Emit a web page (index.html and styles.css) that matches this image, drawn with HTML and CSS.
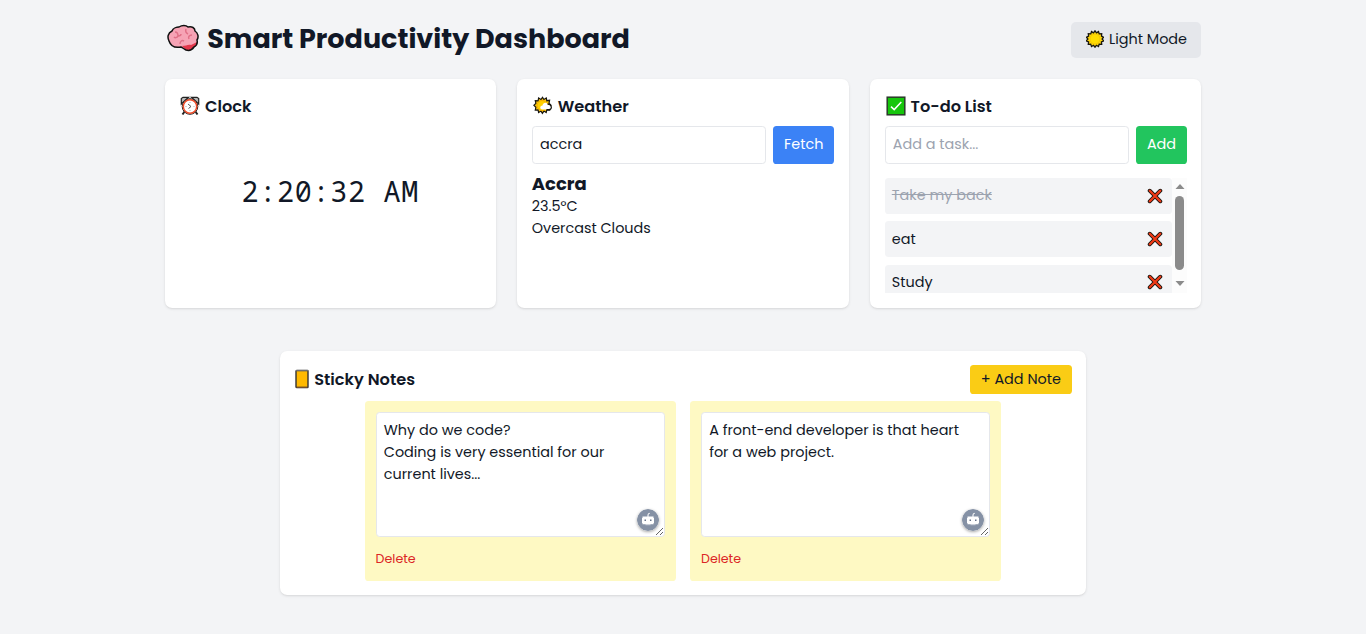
FILE: index.html
```
<!DOCTYPE html>
<html lang="en">
<head>
<meta charset="utf-8">
<title>Smart Productivity Dashboard</title>
<link rel="stylesheet" href="styles.css">
</head>
<body>
<svg class="defs" aria-hidden="true">
  <symbol id="cross" viewBox="0 0 16 16">
    <path d="M2.700 2.700l10.600 10.600M13.300 2.700L2.700 13.300" stroke="#17150f" stroke-width="3.900" stroke-linecap="round"/>
    <path d="M2.800 2.800l10.400 10.400M13.200 2.800L2.800 13.200" stroke="#f03a17" stroke-width="2.300" stroke-linecap="round"/>
  </symbol>
  <symbol id="bot" viewBox="0 0 22 22">
    <circle cx="11" cy="11" r="11" fill="#8591a5"/>
    <path d="M11 8V6q0-1.500 1.800-1.700" fill="none" stroke="#fff" stroke-width="1.100"/>
    <path d="M5.500 7.500h11V9h.5v5h-.5v1.200h-11V14H5V9h.5z" fill="#fff"/>
    <path d="M8.500 15.700h5" stroke="#d5dae2" stroke-width="1"/>
    <rect x="7.500" y="10.500" width="1.500" height="1.500" fill="#66738a"/><rect x="13" y="10.500" width="1.500" height="1.500" fill="#66738a"/>
  </symbol>
</svg>
<div class="container">
  <header class="top">
    <h1 class="title">
      <svg class="brain" viewBox="0 0 32 28"><path d="M2 17C0 13 1 9 5 7c1-3 5-4 7-4 3-2 7-2 9 0 4-1 7 1 7 4 3 2 4 6 2 9 1 4-1 6-3 7-2 3-5 4-8 3-2-1-3-2-5-3-5 1-10 0-12-6z" fill="#f6a3b5"/><path d="M15 22c4 0 6-2 9-1l6-3c0 4-2 5-3 5-2 3-5 4-8 3z" fill="#e2384c"/><path d="M8 8c2 0 3 2 3 4m0 0c2 0 3-1 3-2m-3 2c-1 2-3 2-4 1m12-8c-1 3 0 4 2 5m4 1c-3 0-4 2-3 4m-5 2c-2-1-4 0-4 3" fill="none" stroke="#e07087" stroke-width="1.500"/><path d="M2 17C0 13 1 9 5 7c1-3 5-4 7-4 3-2 7-2 9 0 4-1 7 1 7 4 3 2 4 6 2 9 1 4-1 6-3 7-2 3-5 4-8 3-2-1-3-2-5-3-5 1-10 0-12-6z" fill="none" stroke="#111" stroke-width="1.500"/></svg>
      <span>Smart Productivity Dashboard</span>
    </h1>
    <button class="mode">
      <svg class="sun" viewBox="0 0 18 18"><path d="M9 .8l1.500 2L12.500 1.600l.7 2.300 2.500-.1-.2 2.400L17.600 7.300 16.100 9l1.500 1.900-2.200.9.300 2.500-2.500-.2-.7 2.400-2.100-1.200L9 17.200l-1.500-1.900-2 1.200-.8-2.400-2.400.2.300-2.500-2.200-.9L1.900 9 .4 7.300l2.200-1.100-.3-2.400 2.500.1.700-2.300L7.500 2.800z" fill="#ffd60a" stroke="#17150f" stroke-width="1.300"/><circle cx="9" cy="9" r="5" fill="#ffdc00" stroke="#e6b400" stroke-width=".5"/></svg>
      <span>Light Mode</span>
    </button>
  </header>

  <main class="cards">
    <section class="card">
      <h2 class="heading">
        <svg class="icon" viewBox="0 0 20 20"><path d="M5 15l-2.500 3.500M15 15l2.500 3.500" stroke="#222" stroke-width="2"/><path d="M1.300 8V2.500L3 1.300h5.500L1.300 8zM18.700 8V2.500L17 1.300h-5.500z" fill="#b9b9b9" stroke="#222" stroke-width="1.200"/><circle cx="10" cy="10.500" r="7.800" fill="#fff" stroke="#222" stroke-width="1"/><circle cx="10" cy="10.500" r="6.700" fill="#fff" stroke="#ee4b28" stroke-width="1.500"/><path d="M8 8l3 2.500L8.500 12.500" fill="none" stroke="#444" stroke-width=".9"/><path d="M10 6v1M10 14v1M14.500 10.500h-1M5.500 10.500h1" stroke="#999" stroke-width=".8"/></svg>
        <span>Clock</span>
      </h2>
      <div class="clock">2:20:32 AM</div>
    </section>

    <section class="card">
      <h2 class="heading">
        <svg class="icon" viewBox="0 0 20 20"><path d="M9.500 1.300l1.400 2.200 2.400-1.500.5 2.700 2.800-.4-.6 3 2 1.900-2 2 .6 2.900-2.800-.3-.6 2.700-2.300-1.400-1.500 2.300L8 15.100l-2.400 1.400-.5-2.700-2.800.3.600-2.800L.9 9.300l2-1.900-.6-2.800 2.800.2.500-2.800L8 3.500z" fill="#fdc60b" stroke="#17150f" stroke-width="1.200"/><circle cx="9" cy="9.500" r="5" fill="#ffd000" stroke="#f2a900" stroke-width=".9"/><path d="M9.500 13.500c-3 0-3-4 0-4 .5-3 4-3.500 5-1.200 4-.3 5 4.800 1.500 5.200z" fill="#fff"/><path d="M14.500 8.200c4-.2 5.500 5 1.500 5.400h-2.500" fill="none" stroke="#17150f" stroke-width="1.200"/></svg>
        <span>Weather</span>
      </h2>
      <div class="form">
        <input class="field" value="accra">
        <button class="btn fetch">Fetch</button>
      </div>
      <div class="report">
        <h3 class="place">Accra</h3>
        <p>23.5°C</p>
        <p>Overcast Clouds</p>
      </div>
    </section>

    <section class="card">
      <h2 class="heading">
        <svg class="icon" viewBox="0 0 20 20"><rect x="1.200" y="1.200" width="17.600" height="17.600" fill="#16c60c" stroke="#2b3a2a" stroke-width="1.500"/><path d="M5 10.600l3.200 3L15.300 6" fill="none" stroke="#fff" stroke-width="1.500"/></svg>
        <span>To-do List</span>
      </h2>
      <div class="form">
        <input class="field" placeholder="Add a task...">
        <button class="btn add">Add</button>
      </div>
      <div class="scroller">
        <ul class="tasks">
          <li class="item"><span class="done">Take my back</span><svg class="x"><use href="#cross"/></svg></li>
          <li class="item"><span>eat</span><svg class="x"><use href="#cross"/></svg></li>
          <li class="item"><span>Study</span><svg class="x"><use href="#cross"/></svg></li>
        </ul>
        <div class="track">
          <svg class="arrow" viewBox="0 0 10 5"><path d="M5 0l4.500 5h-9z" fill="#8b8b8b"/></svg>
          <div class="thumb"></div>
          <svg class="arrow down" viewBox="0 0 10 5"><path d="M5 5L.5 0h9z" fill="#8b8b8b"/></svg>
        </div>
      </div>
    </section>
  </main>

  <section class="card notes">
    <div class="notes-top">
      <h2 class="heading notes-h">
        <svg class="book" viewBox="0 0 14 20"><rect x="1" y="1.500" width="12" height="17" rx=".6" fill="#ffb900" stroke="#333" stroke-width="1.400"/><path d="M1.500 1.600h11" stroke="#aaa" stroke-width="1.200" stroke-dasharray="1 1"/><path d="M1.500 18.300h11" stroke="#8b5a2b" stroke-width=".9"/></svg>
        <span>Sticky Notes</span>
      </h2>
      <button class="add-note">+ Add Note</button>
    </div>
    <div class="note-list">
      <article class="note">
        <div class="pad"><textarea class="text" spellcheck="false">Why do we code?
Coding is very essential for our
current lives...</textarea><svg class="bot"><use href="#bot"/></svg></div>
        <button class="delete">Delete</button>
      </article>
      <article class="note">
        <div class="pad"><textarea class="text" spellcheck="false">A front-end developer is that heart
for a web project.</textarea><svg class="bot"><use href="#bot"/></svg></div>
        <button class="delete">Delete</button>
      </article>
    </div>
  </section>
</div>
</body>
</html>
```
FILE: styles.css
```
* { box-sizing: border-box; margin: 0; padding: 0; }
body {
  background: #f3f4f6;
  color: #111827;
  font: 400 14.4px/21.6px Poppins, Inter, "Open Sans", sans-serif;
  min-height: 634px;
}
button, input, textarea { font: inherit; color: inherit; border: 0; outline: 0; }
svg { display: block; flex: none; }
.defs { width: 0; height: 0; position: absolute; }
.container { width: 1036.8px; margin: 0 auto; padding-top: 21.6px; }
.top { display: flex; justify-content: space-between; align-items: center; height: 36px; margin-bottom: 21.6px; }
.title { display: flex; align-items: center; gap: 8.6px; font-size: 27px; line-height: 32.4px; font-weight: 700; }
.brain { width: 32px; height: 28px; margin-left: 2px; margin-bottom: 4px; }
.mode { display: flex; align-items: center; gap: 4.6px; width: 130px; height: 36px; padding-left: 15px; background: #e5e7eb; border-radius: 5px; white-space: nowrap; }
.sun { width: 18px; height: 18px; margin-bottom: 1px; }
.cards { display: grid; grid-template-columns: repeat(3, minmax(0, 1fr)); gap: 21.6px; }
.card { background: #fff; border-radius: 7.2px; padding: 14.4px; box-shadow: 0 1px 3px rgba(0,0,0,.1), 0 1px 2px -1px rgba(0,0,0,.1); height: 228.8px; }
.heading { display: flex; align-items: center; gap: 5px; height: 25.2px; margin-bottom: 7.2px; font-size: 16.2px; line-height: 25.2px; font-weight: 600; padding-left: 1px; }
.icon { width: 20px; height: 20px; }
.clock { display: flex; align-items: center; justify-content: center; height: 130px; font: 28.4px/36px Consolas, "Noto Sans Mono", "DejaVu Sans Mono", monospace; letter-spacing: .7px; }
.form { display: flex; gap: 7.2px; height: 37.8px; }
.field { flex: 1; min-width: 0; border: 1px solid #e5e7eb; border-radius: 3.6px; padding: 0 7.2px 1px; }
.field::placeholder { color: #9ca3af; opacity: 1; }
.btn { color: #fff; border-radius: 3.6px; padding-bottom: 1px; }
.fetch { width: 61px; background: #3b82f6; }
.add { width: 51px; background: #22c55e; }
.report { margin-top: 7.2px; }
.place { font-size: 18px; line-height: 25.2px; font-weight: 700; }
.scroller { display: flex; margin-top: 14.4px; height: 115.2px; overflow: hidden; }
.tasks { flex: 1; list-style: none; display: flex; flex-direction: column; gap: 7.2px; }
.item { display: flex; flex: none; justify-content: space-between; align-items: center; height: 36px; padding: 0 9px 0 7.2px; background: #f3f4f6; border-radius: 3.6px; }
.x { width: 16px; height: 16px; margin-bottom: 1px; }
.done { color: #9ca3af; text-decoration: line-through; }
.track { width: 15px; display: flex; flex-direction: column; align-items: center; gap: 7px; padding-top: 6px; background: #fcfcfc; }
.arrow { width: 10px; height: 5px; }
.thumb { width: 9px; height: 74px; flex: none; border-radius: 5px; background: #8b8b8b; }
.down { margin-top: 4px; }
.notes { width: 806.4px; height: 244px; margin: 43px auto 0; }
.notes-top { display: flex; justify-content: space-between; align-items: center; height: 28.8px; margin-bottom: 7.2px; }
.notes-h { margin: 0; }
.book { width: 14px; height: 20px; margin-bottom: 1px; }
.add-note { width: 102px; height: 28.8px; background: #facc15; border-radius: 3.6px; white-space: nowrap; }
.note-list { display: flex; justify-content: center; gap: 14.4px; }
.note { width: 311px; height: 179.6px; padding: 10.8px; background: #fef9c3; border-radius: 3.6px; }
.pad { position: relative; height: 125px; }
.text { display: block; width: 100%; height: 125px; padding: 7.2px; border: 1px solid #e5e7eb; border-radius: 3.6px; background: #fff; resize: vertical; overflow: hidden; }
.bot { position: absolute; right: 6px; bottom: 6.4px; width: 22px; height: 22px; border-radius: 50%; box-shadow: 0 1px 3px rgba(0,0,0,.35); }
.delete { display: block; margin-top: 13px; background: none; color: #dc2626; font-size: 12.6px; line-height: 18px; }
```
